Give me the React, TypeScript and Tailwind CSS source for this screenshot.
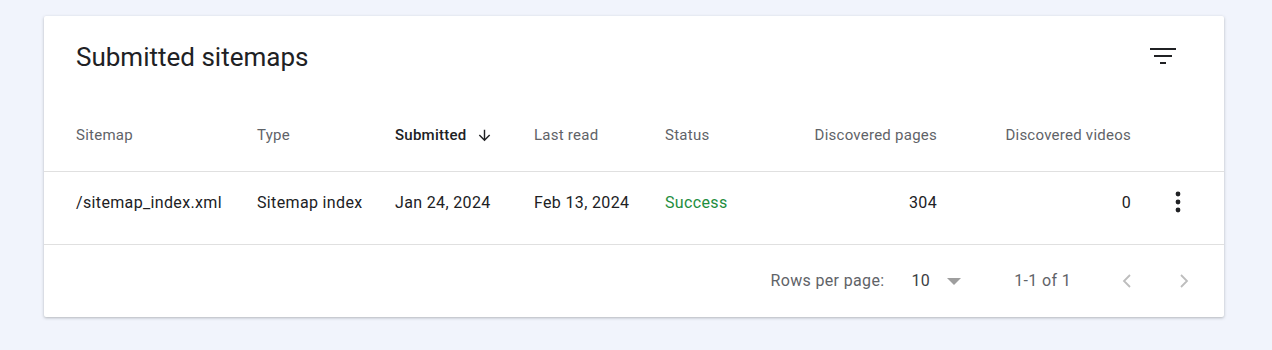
import React from 'react'

const font = { fontFamily: 'Roboto, "Noto Sans", sans-serif' }

function FilterIcon() {
  return (
    <svg width="28" height="20" viewBox="0 0 28 20" fill="#202124">
      <rect x="1" y="0" width="26" height="2" />
      <rect x="5" y="7" width="18" height="2" />
      <rect x="11" y="14" width="6" height="2" />
    </svg>
  )
}

function MoreIcon() {
  return (
    <svg width="8" height="24" viewBox="0 0 8 24" fill="#202124">
      <circle cx="4" cy="4" r="2.4" />
      <circle cx="4" cy="12" r="2.4" />
      <circle cx="4" cy="20" r="2.4" />
    </svg>
  )
}

function ArrowDown() {
  return (
    <svg width="17" height="17" viewBox="0 0 24 24" fill="#202124">
      <path d="M20 12l-1.41-1.41L13 16.17V4h-2v12.17l-5.58-5.59L4 12l8 8 8-8z" />
    </svg>
  )
}

function Chevron({ dir }: { dir: 'left' | 'right' }) {
  return (
    <svg width="12" height="16" viewBox="0 0 12 16" fill="none" stroke="#bdbdbd" strokeWidth="1.8">
      {dir === 'left' ? <path d="M9 2L3 8l6 6" /> : <path d="M3 2l6 6-6 6" />}
    </svg>
  )
}

const cols = 'grid grid-cols-[181px_138px_139px_131px_110px_162px_194px_1fr] pl-[32px]'

export default function App() {
  return (
    <div style={font} className="min-h-[350px] bg-[#f1f4fc] pt-[16px] pl-[44px] pr-[48px]">
      <div className="bg-white rounded-[2px] shadow-[0_1px_3px_rgba(60,64,67,0.35)]">
        <div className="h-[83px] flex items-center justify-between pl-[32px] pr-[47px]">
          <h2 className="text-[26px] text-[#202124] font-normal">Submitted sitemaps</h2>
          <FilterIcon />
        </div>

        <div className={`${cols} h-[73px] items-center text-[15px] tracking-[0.25px] text-[#5f6368] border-b border-[#e0e0e0]`}>
          <div>Sitemap</div>
          <div>Type</div>
          <div className="flex items-center gap-[10px] font-medium text-[#202124]">
            Submitted <ArrowDown />
          </div>
          <div>Last read</div>
          <div>Status</div>
          <div className="text-right">Discovered pages</div>
          <div className="text-right">Discovered videos</div>
          <div />
        </div>

        <div className={`${cols} h-[73px] pt-[19px] items-start text-[16px] tracking-[0.35px] text-[#202124] border-b border-[#e0e0e0]`}>
          <div>/sitemap_index.xml</div>
          <div>Sitemap index</div>
          <div>Jan 24, 2024</div>
          <div>Feb 13, 2024</div>
          <div className="text-[#1e8e3e]">Success</div>
          <div className="text-right">304</div>
          <div className="text-right">0</div>
          <div className="flex justify-center -mt-[1px]">
            <MoreIcon />
          </div>
        </div>

        <div className="h-[72px] flex items-center justify-end pr-[34px] text-[16px] tracking-[0.35px] text-[#5f6368]">
          <span>Rows per page:</span>
          <span className="ml-[27px] text-[#3c4043]">10</span>
          <svg className="ml-[17px]" width="14" height="7" viewBox="0 0 14 7" fill="#9e9e9e">
            <path d="M0 0h14L7 7z" />
          </svg>
          <span className="ml-[53px]">1-1 of 1</span>
          <span className="ml-[50px]"><Chevron dir="left" /></span>
          <span className="ml-[45px]"><Chevron dir="right" /></span>
        </div>
      </div>
    </div>
  )
}
